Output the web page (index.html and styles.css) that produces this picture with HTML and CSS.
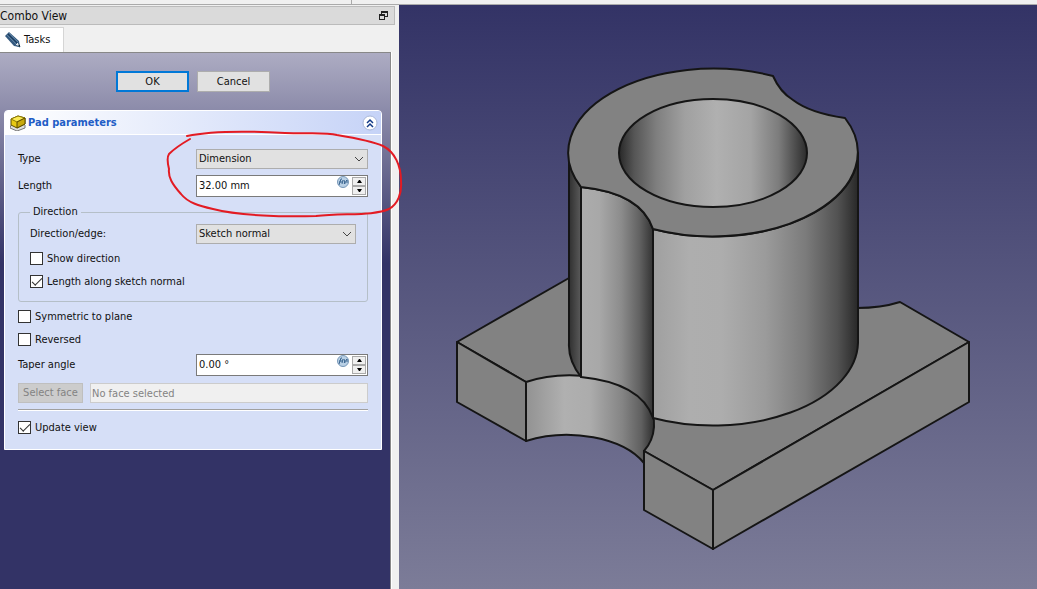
FILE: index.html
```html
<!DOCTYPE html>
<html lang="en">
<head>
    <meta charset="UTF-8">
    <meta name="viewport" content="width=device-width, initial-scale=1.0">
    <title>Pad parameters</title>
    <link rel="stylesheet" href="styles.css">
</head>
<body>
    <div class="toolbar-edge"><span class="toolbar-split"></span></div>
    <div class="workspace">
        <aside class="combo-view">
            <header class="dock-title">
                <h1>Combo View</h1>
                <button type="button" class="dock-float" aria-label="Float panel">
                    <svg viewBox="0 0 9 9" width="9" height="9">
                        <path d="M2 0h7v6H6V5h2V2H3v1H2zM0 3h6v6H0zM1 5v3h4V5z" fill="#222" fill-rule="evenodd"/>
                    </svg>
                </button>
            </header>
            <nav class="tabs">
                <button type="button" class="tab">
                    <svg viewBox="0 0 16 16" width="16" height="16">
                        <path d="M0 4L4 0l10 9 1 6-6-1z" fill="#34597f"/>
                        <path d="M2 3l9 9M4 1l9 9" stroke="#5b7f9f" stroke-width="1"/>
                        <path d="M3 2l9 9" stroke="#1c3a5c" stroke-width="1"/>
                        <path d="M10 13l3-3 2 5z" fill="#e4e8ec" stroke="#34597f" stroke-width="1"/>
                        <path d="M13 13l2 2v-2z" fill="#122"/>
                    </svg>
                    Tasks
                </button>
            </nav>
            <div class="task-area">
                <div class="dialog-buttons">
                    <button type="submit" form="pad-form" class="btn btn-default">OK</button>
                    <button type="button" class="btn">Cancel</button>
                </div>
                <section class="task-box" aria-labelledby="pad-title">
                    <header class="task-header">
                        <svg viewBox="0 0 16 16" width="16" height="16">
                            <path d="M1 10l-1 3 7 3 8-3v-3" fill="#ddd" stroke="#777" stroke-width="1"/>
                            <path d="M1 4l7-3 7 2v6l-8 4-6-3z" fill="#e8c914" stroke="#5d4d00" stroke-width="1"/>
                            <path d="M1 4l7-3 7 2-8 4z" fill="#fbea55" stroke="#8d7900" stroke-width="1"/>
                            <path d="M7 7v6l8-4V3z" fill="#c9a90c" stroke="#5d4d00" stroke-width="1"/>
                        </svg>
                        <h2 id="pad-title">Pad parameters</h2>
                        <button type="button" class="collapse" aria-label="Collapse">
                            <svg viewBox="0 0 16 16" width="16" height="16">
                                <circle cx="8" cy="8" r="7" fill="#fff" stroke="#a9b7d8"/>
                                <path d="M5 8l3-3 3 3M5 12l3-3 3 3" fill="none" stroke="#123a86" stroke-width="1.5"/>
                            </svg>
                        </button>
                    </header>
                    <form id="pad-form" class="task-body">
                        <div class="row">
                            <label for="type">Type</label>
                            <div class="select">
                                <select id="type"><option>Dimension</option></select>
                                <svg viewBox="0 0 10 6" width="10" height="6"><path d="M1 1l4 4 4-4" fill="none" stroke="#444"/></svg>
                            </div>
                        </div>
                        <div class="row row-length">
                            <label for="length">Length</label>
                            <div class="spin">
                                <input type="text" id="length" value="32.00 mm">
                                <svg class="fx" viewBox="0 0 12 12" width="12" height="12">
                                    <circle cx="6" cy="6" r="5.5" fill="#b9d0e5" stroke="#7898b8"/>
                                    <path d="M2 9l2-6h1M2 6h3M6 4L5 8M7 4l1 4M10 4L7 8M10 4v3" fill="none" stroke="#39648f"/>
                                </svg>
                                <span class="steps">
                                    <button type="button" aria-label="Increase length"><svg viewBox="0 0 5 3" width="5" height="3"><path d="M0 3h5L3 0H2z"/></svg></button>
                                    <button type="button" aria-label="Decrease length"><svg viewBox="0 0 5 3" width="5" height="3"><path d="M0 0h5L3 3H2z"/></svg></button>
                                </span>
                            </div>
                        </div>
                        <fieldset class="group">
                            <legend>Direction</legend>
                            <div class="row">
                                <label for="direction">Direction/edge:</label>
                                <div class="select">
                                    <select id="direction"><option>Sketch normal</option></select>
                                    <svg viewBox="0 0 10 6" width="10" height="6"><path d="M1 1l4 4 4-4" fill="none" stroke="#444"/></svg>
                                </div>
                            </div>
                            <label class="check"><input type="checkbox">Show direction</label>
                            <label class="check"><input type="checkbox" checked>Length along sketch normal</label>
                        </fieldset>
                        <label class="check"><input type="checkbox">Symmetric to plane</label>
                        <label class="check"><input type="checkbox">Reversed</label>
                        <div class="row row-angle">
                            <label for="angle">Taper angle</label>
                            <div class="spin">
                                <input type="text" id="angle" value="0.00 °">
                                <svg class="fx" viewBox="0 0 12 12" width="12" height="12">
                                    <circle cx="6" cy="6" r="5.5" fill="#b9d0e5" stroke="#7898b8"/>
                                    <path d="M2 9l2-6h1M2 6h3M6 4L5 8M7 4l1 4M10 4L7 8M10 4v3" fill="none" stroke="#39648f"/>
                                </svg>
                                <span class="steps">
                                    <button type="button" aria-label="Increase angle"><svg viewBox="0 0 5 3" width="5" height="3"><path d="M0 3h5L3 0H2z"/></svg></button>
                                    <button type="button" aria-label="Decrease angle"><svg viewBox="0 0 5 3" width="5" height="3"><path d="M0 0h5L3 3H2z"/></svg></button>
                                </span>
                            </div>
                        </div>
                        <div class="face-row">
                            <button type="button" class="face-btn" disabled>Select face</button>
                            <input type="text" class="face-input" placeholder="No face selected" aria-label="Face" disabled>
                        </div>
                        <hr class="divider">
                        <label class="check"><input type="checkbox" checked>Update view</label>
                    </form>
                </section>
            </div>
            <!-- hand-drawn circle around type and length -->
            <svg class="marker" viewBox="160 125 245 95" width="245" height="95">
                <path d="M187 136C215 130 250 131 285 133C310 134 325 132 337 135C355 138 372 141 383 146C395 152 401 166 401 181C402 193 398 204 389 209C374 216 345 213 316 216C285 217 240 216 213 209C200 206 188 203 181 194C172 184 168 177 169 169C167 161 167 157 169 154C176 147 183 143 190 139"/>
            </svg>
        </aside>
        <main class="viewport">
            <svg class="model" viewBox="399 5 638 584" role="img" aria-label="Padded part">
                <defs>
                    <linearGradient id="outer" gradientUnits="userSpaceOnUse" x1="568" y1="0" x2="858" y2="0">
                        <stop offset="0" stop-color="#2c2c2c"/>
                        <stop offset=".05" stop-color="#606060"/>
                        <stop offset=".29" stop-color="#9f9f9f"/>
                        <stop offset=".42" stop-color="#aeaeae"/>
                        <stop offset=".53" stop-color="#adadad"/>
                        <stop offset=".68" stop-color="#9b9b9b"/>
                        <stop offset=".82" stop-color="#7b7b7b"/>
                        <stop offset=".93" stop-color="#525252"/>
                        <stop offset="1" stop-color="#282828"/>
                    </linearGradient>
                    <linearGradient id="bore" gradientUnits="userSpaceOnUse" x1="619" y1="0" x2="807" y2="0">
                        <stop offset="0" stop-color="#282828"/>
                        <stop offset=".08" stop-color="#555"/>
                        <stop offset=".2" stop-color="#7f7f7f"/>
                        <stop offset=".35" stop-color="#a0a0a0"/>
                        <stop offset=".52" stop-color="#b0b0b0"/>
                        <stop offset=".7" stop-color="#a4a4a4"/>
                        <stop offset=".85" stop-color="#7c7c7c"/>
                        <stop offset="1" stop-color="#2c2c2c"/>
                    </linearGradient>
                    <linearGradient id="groove" gradientUnits="userSpaceOnUse" x1="581" y1="0" x2="654" y2="0">
                        <stop offset="0" stop-color="#acacac"/>
                        <stop offset=".25" stop-color="#a8a8a8"/>
                        <stop offset=".55" stop-color="#8c8c8c"/>
                        <stop offset=".8" stop-color="#626262"/>
                        <stop offset="1" stop-color="#303030"/>
                    </linearGradient>
                    <linearGradient id="cutout" gradientUnits="userSpaceOnUse" x1="526" y1="0" x2="654" y2="0">
                        <stop offset="0" stop-color="#929292"/>
                        <stop offset=".3" stop-color="#b0b0b0"/>
                        <stop offset=".5" stop-color="#acacac"/>
                        <stop offset=".75" stop-color="#858585"/>
                        <stop offset=".9" stop-color="#606060"/>
                        <stop offset="1" stop-color="#2e2e2e"/>
                    </linearGradient>
                </defs>
                <g class="edges">
                    <!-- base plate -->
                    <path class="face" d="M457 342L568 278L858 308Q881 308 900 302L969 342L713 490L644 451Q654 440 654 427L581 377Q553 374 526 382Z" stroke="none"/>
                    <path d="M526 382L457 342L569 278M857 308Q881 308 900 302L969 342L713 490L644 451"/>
                    <path class="face" d="M457 342L526 382V441L457 402Z"/>
                    <path d="M526 382A85 49 0 0 1 654 427Q653 441 644 451V463A85 49 0 0 0 526 441Z" fill="url(#cutout)"/>
                    <path class="face" d="M644 451L713 490V549L644 510Z"/>
                    <path class="face" d="M713 490L969 342V402L713 549Z"/>
                    <!-- cylinder walls -->
                    <path d="M569 153V343Q568 360 581 377V187A145 84 0 0 1 569 153Z" fill="url(#outer)"/>
                    <path d="M581 187V377Q641 383 653 418V229Q641 193 581 187Z" fill="url(#groove)"/>
                    <path d="M653 229V418A145 84 0 0 0 858 343V153A145 84 0 0 1 653 229Z" fill="url(#outer)"/>
                    <!-- top ring -->
                    <path class="face" d="M581 187A145 84 0 0 1 773 76Q780 92 793 100Q810 113 845 118A145 84 0 0 1 653 229Q641 193 581 187Z"/>
                    <ellipse cx="713" cy="153" rx="94" ry="54" fill="url(#bore)"/>
                </g>
            </svg>
        </main>
    </div>
</body>
</html>
```
FILE: styles.css
```css
* {
    box-sizing: border-box;
}

body {
    margin: 0;
    min-height: 100vh;
    display: flex;
    flex-direction: column;
    background: #f0f0f0;
    color: #111;
    font-family: "DejaVu Sans Condensed", "Noto Sans", sans-serif;
    font-size: 11px;
    line-height: 14px;
}

button, input, select {
    font: inherit;
    color: inherit;
    margin: 0;
}

svg {
    display: block;
}

.toolbar-edge {
    display: flex;
    height: 5px;
    border-bottom: 1px solid #aaa;
}

.toolbar-split {
    width: 352px;
    border-right: 1px solid #aaa;
}

.workspace {
    flex: 1;
    display: grid;
    grid-template-columns: 399px 1fr;
}

.combo-view {
    position: relative;
    display: flex;
    flex-direction: column;
    padding-top: 1px;
}

.dock-title {
    display: flex;
    align-items: center;
    justify-content: space-between;
    height: 19px;
    margin-right: 4px;
    padding-right: 6px;
    background: #dadada;
    border: 1px solid #bbb;
    border-left: none;
}

.dock-title h1 {
    margin: 0;
    font-size: 12px;
    font-weight: normal;
}

.dock-float {
    padding: 0;
    border: none;
    background: none;
}

.tabs {
    padding-top: 2px;
    height: 27px;
    display: flex;
}

.tab {
    display: flex;
    align-items: center;
    gap: 3px;
    width: 64px;
    padding: 0 0 0 5px;
    background: #fff;
    border: 1px solid #d5d5d5;
    border-width: 1px 1px 0 0;
}

.task-area {
    flex: 1;
    margin-right: 8px;
    padding: 18px 8px 0 4px;
    border-top: 1px solid #888;
    border-right: 1px solid #888;
    background: linear-gradient(#adacc3, #333366 210px);
    box-shadow: 1px 0 #fff;
}

.dialog-buttons {
    display: flex;
    justify-content: center;
    gap: 8px;
}

.btn {
    width: 73px;
    height: 21px;
    padding: 0;
    background: #e1e1e1;
    border: 1px solid #adadad;
}

.btn-default {
    border: 2px solid #0078d7;
}

.task-box {
    margin-top: 18px;
    border: 1px solid #fff;
    border-radius: 4px 4px 0 0;
    background: #d6dff7;
}

.task-header {
    display: flex;
    align-items: center;
    gap: 2px;
    height: 24px;
    padding: 0 3px 0 5px;
    border-bottom: 1px solid #fff;
    border-radius: 3px 3px 0 0;
    background: linear-gradient(to right, #fff, #c6d3f7);
}

.task-header h2 {
    flex: 1;
    margin: 0;
    color: #215dc6;
    font-size: 11px;
}

.collapse {
    padding: 0;
    border: none;
    background: none;
}

.task-body {
    padding: 14px 13px 10px;
}

.row {
    display: grid;
    grid-template-columns: 178px minmax(0, 1fr);
    align-items: center;
}

.row-length {
    margin-top: 6px;
}

.select {
    display: grid;
    align-items: center;
}

.select select, .select svg {
    grid-area: 1 / 1;
}

.select select {
    width: 100%;
    height: 20px;
    padding: 0 2px;
    appearance: none;
    background: #e1e1e1;
    border: 1px solid #adadad;
    border-radius: 0;
}

.select svg {
    justify-self: end;
    margin-right: 4px;
    pointer-events: none;
}

.spin {
    display: flex;
    height: 22px;
    background: #fff;
    border: 1px solid #7a7a7a;
}

.spin input {
    flex: 1;
    min-width: 0;
    padding: 0 2px;
    border: none;
    background: none;
}

.fx {
    margin-right: 2px;
}

.steps {
    display: flex;
    flex-direction: column;
    padding: 1px;
}

.steps button {
    display: grid;
    place-items: center;
    width: 14px;
    height: 9px;
    padding: 0;
    background: #f0f0f0;
    border: 1px solid #aaa;
}

.group {
    min-width: 0;
    margin: 8px 0 3px;
    padding: 5px 11px 8px;
    border: 1px solid #b5bfc8;
    border-radius: 3px;
}

.group legend {
    padding: 0 3px;
}

.group .row {
    grid-template-columns: 166px minmax(0, 1fr);
    margin-bottom: 3px;
}

.check {
    display: flex;
    align-items: center;
    gap: 4px;
    height: 23px;
}

.check input {
    display: grid;
    place-items: center;
    width: 13px;
    height: 13px;
    appearance: none;
    background: #fff;
    border: 1px solid #333;
}

.check input:checked::after {
    content: "";
    width: 9px;
    height: 4px;
    border: solid #333;
    border-width: 0 0 1px 1px;
    transform: translateY(-1px) rotate(-45deg);
}

.row-angle {
    margin-top: 3px;
}

.face-row {
    display: flex;
    gap: 7px;
    margin: 7px 0 6px;
}

.face-btn {
    width: 65px;
    height: 20px;
    padding: 0;
    background: #ccc;
    border: 1px solid #bfbfbf;
    color: #838383;
}

.face-input {
    flex: 1;
    min-width: 0;
    height: 20px;
    padding: 0 1px;
    background: #f0f0f0;
    border: 1px solid #ccc;
}

.face-input::placeholder {
    color: #838383;
}

.divider {
    margin: 0 0 5px;
    border: none;
    border-top: 1px solid #a0a0a0;
    border-bottom: 1px solid #fff;
}

/* sits over the form and reaches past the panel edge */
.marker {
    position: absolute;
    top: 120px;
    left: 160px;
    fill: none;
    stroke: #e31b23;
    stroke-width: 2;
    stroke-linecap: round;
    pointer-events: none;
    z-index: 1;
}

.viewport {
    display: flex;
    background: linear-gradient(#333366, #7c7c98);
}

.model {
    width: 100%;
    height: auto;
}

.edges {
    stroke: #151515;
    stroke-width: 2;
    stroke-linejoin: round;
    fill: none;
}

.face {
    fill: #828282;
}
```
